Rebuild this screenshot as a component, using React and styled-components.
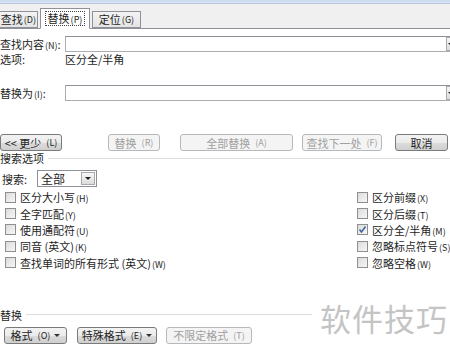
import React from 'react'
import styled, { createGlobalStyle } from 'styled-components'

const Global = createGlobalStyle`
  body {
    margin: 0;
    background: #ffffff;
    font-family: "Noto Sans CJK SC", "DejaVu Sans", sans-serif;
    font-size: 11px;
    color: #1e1e1e;
  }
`

const Page = styled.div`
  position: relative;
  width: 450px;
  height: 350px;
  overflow: hidden;
  background: #fff;
`

const TitleStrip = styled.div`
  height: 4px;
  background: linear-gradient(#c9daee, #dbe6f4);
  border-bottom: 1px solid #b9c9dd;
  box-sizing: border-box;
`

const TabBar = styled.div`
  display: flex;
  align-items: flex-end;
  gap: 2px;
  height: 25px;
  background: #f0f0f0;
  border-bottom: 1px solid #8e9198;
  box-sizing: border-box;
`

const Tab = styled.div`
  display: flex;
  align-items: center;
  justify-content: ${p => (p.$edge ? 'flex-end' : 'center')};
  padding-right: ${p => (p.$edge ? '1px' : '0')};
  box-sizing: border-box;
  height: ${p => (p.$active ? '21px' : '17px')};
  margin-bottom: ${p => (p.$active ? '-1px' : '0')};
  width: ${p => p.$w}px;
  margin-left: ${p => p.$ml || 0}px;
  border: 1px solid #8e9198;
  border-bottom: ${p => (p.$active ? '1px solid #fff' : '1px solid #8e9198')};
  background: ${p => (p.$active ? '#fff' : 'linear-gradient(#f4f4f4, #e4e4e4)')};
  font-size: 11px;
  line-height: 1;
  white-space: nowrap;
`

const Focus = styled.span`
  border: 1px dotted #444;
  padding: 1px 2px;
`

const Panel = styled.div`
  display: flex;
  flex-direction: column;
`

const Row = styled.div`
  display: flex;
  align-items: center;
  height: ${p => p.$h || 16}px;
  margin-top: ${p => p.$top || 0}px;
  white-space: nowrap;
`

const Label = styled.div`
  width: ${p => p.$w || 65}px;
  margin-left: ${p => p.$ml || 0}px;
  flex-shrink: 0;
  white-space: nowrap;
`

const Combo = styled.div`
  display: flex;
  width: 392px;
  height: 16px;
  box-sizing: border-box;
  border: 1px solid #abadb3;
  border-top-color: #8f9198;
  background: #fff;
  justify-content: flex-end;
  flex-shrink: 0;
`

const DropBtn = styled.div`
  width: ${p => p.$w || 13}px;
  height: 100%;
  box-sizing: border-box;
  border: 1px solid #a9aaac;
  background: linear-gradient(#f6f6f6, #dcdcdc);
  display: flex;
  align-items: center;
  justify-content: center;
  &::after {
    content: '';
    border-left: 3px solid transparent;
    border-right: 3px solid transparent;
    border-top: 3px solid #222;
  }
`

const Button = styled.div`
  box-sizing: border-box;
  width: ${p => p.$w}px;
  margin-left: ${p => p.$ml || 0}px;
  height: 17px;
  display: flex;
  align-items: center;
  justify-content: center;
  gap: 4px;
  border: 1px solid ${p => (p.$disabled ? '#b5b9bc' : '#7a7a7a')};
  border-radius: 3px;
  background: ${p =>
    p.$disabled
      ? '#f4f4f4'
      : 'linear-gradient(#f3f3f3 0%, #ebebeb 50%, #dcdcdc 51%, #cfcfcf 100%)'};
  color: ${p => (p.$disabled ? '#a0a0a0' : '#1e1e1e')};
  font-size: 11px;
  white-space: nowrap;
  flex-shrink: 0;
`

const Caret = styled.span`
  border-left: 3px solid transparent;
  border-right: 3px solid transparent;
  border-top: 3px solid #333;
`

const GroupHeader = styled.div`
  display: flex;
  align-items: center;
  gap: 4px;
  height: 14px;
  margin-top: ${p => p.$top || 0}px;
  &::after {
    content: '';
    flex: 1;
    height: 1px;
    background: #dcdcdc;
  }
`

const Select = styled.div`
  display: flex;
  align-items: center;
  justify-content: space-between;
  box-sizing: border-box;
  width: 60px;
  height: 17px;
  padding: 1px 1px 1px 3px;
  border: 1px solid #8f9198;
  background: #fff;
  font-size: 12px;
`

const Options = styled.div`
  display: grid;
  grid-template-columns: 352px 1fr;
  grid-auto-flow: column;
  grid-template-rows: repeat(5, 16.4px);
  margin-top: 2px;
  padding-left: 5px;
`

const Check = styled.div`
  display: flex;
  align-items: center;
  gap: 4px;
  white-space: nowrap;
`

const Box = styled.span`
  width: 11px;
  height: 11px;
  flex-shrink: 0;
  box-sizing: border-box;
  border: 1px solid #8e8f8f;
  background: linear-gradient(135deg, #dcdcdc, #f6f6f6);
  display: flex;
  align-items: center;
  justify-content: center;
`

const Key = styled.span`
  font-size: 9px;
  margin-left: 1px;
`

const Watermark = styled.div`
  position: absolute;
  left: 312px;
  top: 292px;
  width: 140px;
  height: 50px;
  background: #fff;
  color: #c4c4c4;
  font-size: 31px;
  letter-spacing: 1px;
  display: flex;
  align-items: center;
  padding-left: 8px;
  box-sizing: border-box;
`

const left = [
  ['区分大小写', 'H'],
  ['全字匹配', 'Y'],
  ['使用通配符', 'U'],
  ['同音 (英文)', 'K'],
  ['查找单词的所有形式 (英文)', 'W'],
]

const right = [
  ['区分前缀', 'X', false],
  ['区分后缀', 'T', false],
  ['区分全/半角', 'M', true],
  ['忽略标点符号', 'S', false],
  ['忽略空格', 'W', false],
]

function CheckItem({ text, k, checked }) {
  return (
    <Check>
      <Box>
        {checked && (
          <svg width="9" height="9" viewBox="0 0 9 9">
            <path d="M1.5 4.5 L3.5 7 L7.5 1.5" fill="none" stroke="#3b5f9a" strokeWidth="1.4" />
          </svg>
        )}
      </Box>
      <span>
        {text}
        <Key>({k})</Key>
      </span>
    </Check>
  )
}

export default function App() {
  return (
    <Page>
      <Global />
      <TitleStrip />
      <TabBar>
        <Tab $w={40} $ml={-2} $edge>查找<Key>(D)</Key></Tab>
        <Tab $w={50} $active><Focus>替换<Key>(P)</Key></Focus></Tab>
        <Tab $w={49}>定位<Key>(G)</Key></Tab>
      </TabBar>
      <Panel>
        <Row $top={7}>
          <Label>查找内容<Key>(N)</Key>:</Label>
          <Combo><DropBtn $w={10} /></Combo>
        </Row>
        <Row $h={14}>
          <Label>选项:</Label>
          <span>区分全/半角</span>
        </Row>
        <Row $top={19}>
          <Label>替换为<Key>(I)</Key>:</Label>
          <Combo><DropBtn $w={10} /></Combo>
        </Row>
        <Row $top={33} $h={17}>
          <Button $w={62}>&lt;&lt; 更少<Key>(L)</Key></Button>
          <Button $w={52} $ml={46} $disabled>替换<Key>(R)</Key></Button>
          <Button $w={113} $ml={20} $disabled>全部替换<Key>(A)</Key></Button>
          <Button $w={80} $ml={9} $disabled>查找下一处<Key>(F)</Key></Button>
          <Button $w={53} $ml={13}>取消</Button>
        </Row>
        <GroupHeader>搜索选项</GroupHeader>
        <Row $top={5} $h={17}>
          <Label $w={35} $ml={2}>搜索:</Label>
          <Select>全部<DropBtn $w={14} /></Select>
        </Row>
        <Options>
          {left.map(([t, k]) => (
            <CheckItem key={t} text={t} k={k} />
          ))}
          {right.map(([t, k, c]) => (
            <CheckItem key={t} text={t} k={k} checked={c} />
          ))}
        </Options>
        <GroupHeader $top={37}>替换</GroupHeader>
        <Row $top={5} $h={17}>
          <Button $w={63} $ml={4}>格式<Key>(O)</Key><Caret /></Button>
          <Button $w={80} $ml={10}>特殊格式<Key>(E)</Key><Caret /></Button>
          <Button $w={86} $ml={9} $disabled>不限定格式<Key>(T)</Key></Button>
        </Row>
      </Panel>
      <Watermark>软件技巧</Watermark>
    </Page>
  )
}
